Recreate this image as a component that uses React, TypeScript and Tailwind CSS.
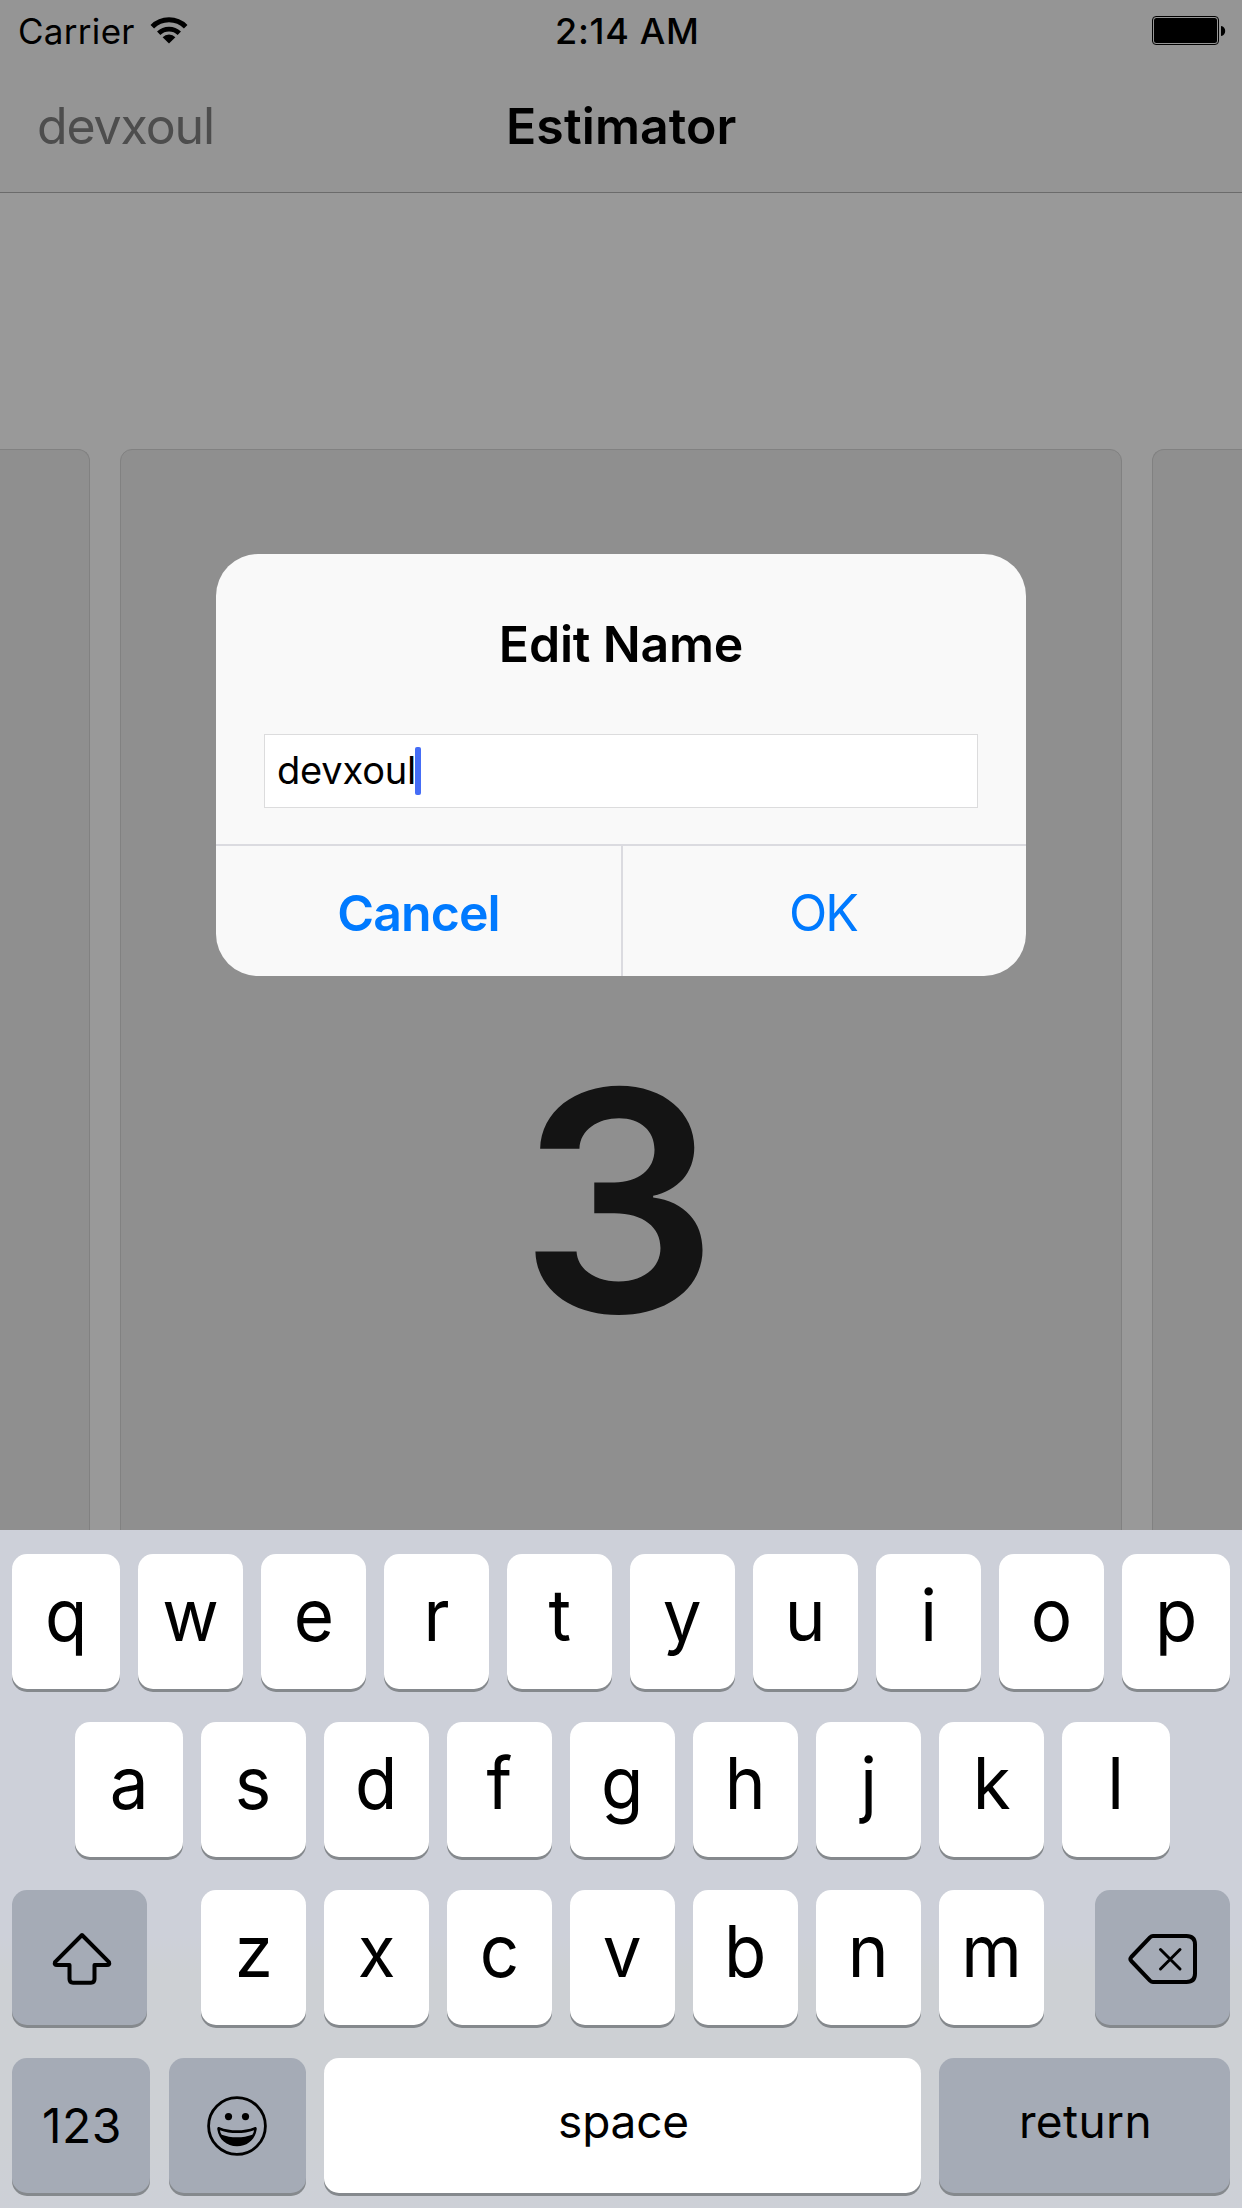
import React from "react";
import clsx from "clsx";

function WifiIcon() {
  return (
    <svg width="38" height="28" viewBox="0 0 38 28" className="block">
      <path d="M2.3 10.7A23.6 23.6 0 0 1 35.7 10.7" fill="none" stroke="#000" strokeWidth="5" />
      <path d="M8.7 17.3A14.9 14.9 0 0 1 29.3 17.3" fill="none" stroke="#000" strokeWidth="4.8" />
      <path d="M19 27.6L12.6 21.2A9 9 0 0 1 25.4 21.2Z" fill="#000" />
    </svg>
  );
}

function BatteryIcon() {
  return (
    <svg width="74" height="30" viewBox="0 0 74 30" className="block">
      <rect x="0.5" y="0.5" width="66" height="28" rx="3.5" fill="none" stroke="#000" />
      <rect x="2" y="2" width="63" height="25" rx="2.5" fill="#000" />
      <path d="M69 10C71.8 10.4 73.2 12.4 73.2 15C73.2 17.6 71.8 19.6 69 20Z" fill="#000" />
    </svg>
  );
}

function ShiftIcon() {
  return (
    <svg width="62" height="54" viewBox="0 0 62 54" fill="none" stroke="#000" strokeWidth="4" strokeLinejoin="round">
      <path d="M31 3L58 30.2Q59 33 56 33H43.5V47Q43.5 50.7 40 50.7H22Q18.5 50.7 18.5 47V33H6Q3 33 4 30.2Z" />
    </svg>
  );
}

function DeleteIcon() {
  return (
    <svg width="70" height="52" viewBox="0 0 70 52" fill="none" stroke="#000" strokeLinejoin="round" strokeLinecap="round">
      <path strokeWidth="4" d="M25 3H58.5Q67 3 67 11.5V40.5Q67 49 58.5 49H25Q23.4 49 22 47.6L3.3 28Q1.5 26 3.3 24L22 4.4Q23.4 3 25 3Z" />
      <path strokeWidth="3" d="M32.5 16.5L52 36M52 16.5L32.5 36" />
    </svg>
  );
}

function EmojiIcon() {
  return (
    <svg width="60" height="60" viewBox="0 0 60 60">
      <circle cx="30" cy="30" r="28.4" fill="none" stroke="#000" strokeWidth="2.8" />
      <circle cx="21.5" cy="20.6" r="3.6" fill="#000" />
      <circle cx="38.5" cy="20.6" r="3.6" fill="#000" />
      <path
        fillRule="evenodd"
        fill="#000"
        d="M12.6 31.2C23 35.4 37 35.4 47.4 31.2C49 30.7 49.9 31.6 49.7 33.2C48.2 43.5 40.3 50.2 30 50.2C19.7 50.2 11.8 43.5 10.3 33.2C10.1 31.6 11 30.7 12.6 31.2ZM12.9 34.2C13.2 36 13.8 37.6 14.7 38.8C23.5 42.2 36.5 42.2 45.3 38.8C46.2 37.6 46.8 36 47.1 34.2C36.5 38 23.5 38 12.9 34.2Z"
      />
    </svg>
  );
}

type KeyProps = { className?: string; dark?: boolean; label?: string; children: React.ReactNode };

function Key({ className, dark, label, children }: KeyProps) {
  return (
    <button
      type="button"
      aria-label={label}
      className={clsx(
        "flex h-[135px] shrink-0 items-center justify-center rounded-[15px] text-black shadow-[0_3px_0_#85898d]",
        dark ? "bg-[#a5abb6]" : "bg-white",
        className,
      )}
    >
      {children}
    </button>
  );
}

function Letters({ letters, wideEnds }: { letters: string; wideEnds?: boolean }) {
  return (
    <div className="flex gap-[18px]">
      {letters.split("").map((c, i) => (
        <Key
          key={c}
          className={clsx(
            "pb-[13px] text-[72px] leading-none font-normal",
            wideEnds && (i === 0 || i === letters.length - 1) ? "w-[108px]" : "w-[105px]",
          )}
        >
          <span className="scale-x-[0.96]">{c}</span>
        </Key>
      ))}
    </div>
  );
}

function Keyboard() {
  return (
    <section className="flex h-[678px] shrink-0 flex-col gap-[33px] bg-[linear-gradient(180deg,#cdd0d9_0%,#cdd0d9_60%,#cdd0d4_65%,#cdd0d4_90%,#cdd0d7_100%)] px-3 pt-6">
      <Letters letters="qwertyuiop" wideEnds />
      <div className="flex pl-[63px]">
        <Letters letters="asdfghjkl" wideEnds />
      </div>
      <div className="flex">
        <Key dark label="shift" className="mr-[54px] w-[135px] pt-[2px] pl-[4px]">
          <ShiftIcon />
        </Key>
        <Letters letters="zxcvbnm" />
        <Key dark label="delete" className="ml-[51px] w-[135px] pt-[3px] pl-[1px]">
          <DeleteIcon />
        </Key>
      </div>
      <div className="flex">
        <Key dark className="mr-[19px] w-[138px] pl-[2px] text-[48px] tracking-[0.6px]">
          123
        </Key>
        <Key dark label="emoji" className="mr-[18px] w-[137px] pr-[1px]">
          <EmojiIcon />
        </Key>
        <Key className="mr-[18px] w-[597px] pb-[9px] pl-[2px] text-[46px] tracking-[-0.2px]">space</Key>
        <Key dark className="w-[291px] pb-[9px] pl-[2px] text-[46px] tracking-[0.4px]">
          return
        </Key>
      </div>
    </section>
  );
}

function EditNameDialog() {
  return (
    <div className="absolute top-[554px] left-[216px] flex h-[422px] w-[810px] flex-col overflow-hidden rounded-[42px] bg-[#f9f9f9]">
      <h2 className="mt-[60px] text-center text-[50px] leading-[60px] font-semibold tracking-[-0.2px]">Edit Name</h2>
      <div className="mx-12 mt-[60px] flex h-[74px] items-center border border-[#dcdcdd] bg-white pl-3">
        <span className="pb-[2px] text-[38px] leading-none tracking-[-0.2px]">devxoul</span>
        <span className="-ml-px h-12 w-1.5 rounded-[2px] bg-[#456df6]" />
      </div>
      <div className="mt-9 flex flex-1 border-t-2 border-[#dbdbe0] text-[50px] text-[#007aff]">
        <button type="button" className="w-[407px] border-r-2 border-[#dbdbe0] pt-[5px] font-semibold tracking-[-0.9px]">
          Cancel
        </button>
        <button type="button" className="flex-1 pt-[5px] pr-[3px] tracking-[-2px]">
          OK
        </button>
      </div>
    </div>
  );
}

export default function App() {
  return (
    <div className="relative flex h-[2208px] w-[1242px] flex-col overflow-hidden bg-[#999999] font-['Inter',sans-serif] text-black">
      <header className="h-[193px] shrink-0 border-b border-[#6b6b6b] bg-[#959595]">
        <div className="grid h-[62px] grid-cols-[555px_1fr_auto] items-center pr-4 text-[35px]">
          <div className="flex items-center gap-[15px] pl-[18px]">
            <span className="tracking-[0.3px]">Carrier</span>
            <div className="pb-[3px]">
              <WifiIcon />
            </div>
          </div>
          <span className="text-[36px] font-medium tracking-[0.7px]">2:14 AM</span>
          <BatteryIcon />
        </div>
        <div className="grid h-32 grid-cols-[506px_1fr] items-center text-[50px]">
          <span className="pl-[37px] tracking-[-1.1px] text-[#4d4d4d]">devxoul</span>
          <h1 className="font-semibold tracking-[0.1px]">Estimator</h1>
        </div>
      </header>
      <main className="flex min-h-0 flex-1 items-start gap-[30px] overflow-hidden pt-[256px]">
        <div className="h-[1502px] w-[90px] shrink-0 rounded-tr-[12px] border-t border-r border-[#818181] bg-[#8f8f8f]" />
        <div className="flex h-[1502px] w-[1002px] shrink-0 items-center justify-center rounded-[12px] border border-[#818181] bg-[#8f8f8f] pr-[4px] text-[307px] leading-none font-semibold text-[#141414]">
          <span className="scale-x-[1.02]">3</span>
        </div>
        <div className="h-[1502px] w-[90px] shrink-0 rounded-tl-[12px] border-t border-l border-[#818181] bg-[#8f8f8f]" />
      </main>
      <Keyboard />
      <EditNameDialog />
    </div>
  );
}
